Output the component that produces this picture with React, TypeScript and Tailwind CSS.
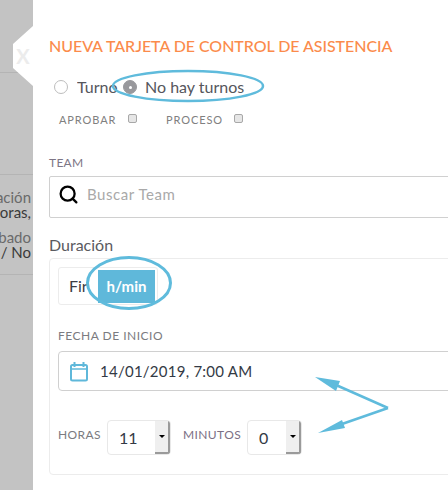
import { Search } from "lucide-react";

function Radio({ checked }: { checked?: boolean }) {
  return (
    <span
      className={`w-[14px] h-[14px] rounded-full flex-none flex items-center justify-center border ${
        checked ? "bg-[#98989c] border-[#98989c]" : "bg-white border-[#bdbdbd]"
      }`}
    >
      {checked && <span className="w-[3px] h-[3px] rounded-full bg-white" />}
    </span>
  );
}

function Check() {
  return <span className="block w-[9px] h-[9px] mb-[3px] rounded-[2px] bg-[#e6e6e6] border border-[#a8a8a8]" />;
}

function SpinSelect({ value, width }: { value: string; width: string }) {
  return (
    <div className={`${width} h-[35px] flex-none flex border border-[#e8e8e8] rounded-[4px] overflow-hidden bg-white`}>
      <span className="flex-1 pl-[11px] flex items-center text-[16px] text-[#333a45]">{value}</span>
      <span className="w-[15px] bg-[#efefef] border-r-2 border-b-2 border-[#9a9a9a] flex items-center justify-center">
        <span className="w-0 h-0 border-l-[3px] border-r-[3px] border-t-[3px] border-l-transparent border-r-transparent border-t-black" />
      </span>
    </div>
  );
}

export default function App() {
  return (
    <div className="relative flex w-[448px] h-[490px] overflow-hidden bg-white font-['Lato',sans-serif]">
      {/* fondo atenuado */}
      <div className="w-[33px] flex-none bg-[#c3c3c3] text-[15px] leading-[15px] text-[#6a6a6a] overflow-hidden">
        <div className="h-[73px] border-b border-[#b4b4b4]" />
        <div className="h-[102px] border-b border-[#b4b4b4]" />
        <div className="h-[100px] border-b border-[#b4b4b4] pt-[15px] pr-[2px] whitespace-nowrap flex flex-col items-end">
          <span>ación</span>
          <span className="text-[#3a3a3a]">oras,</span>
          <span className="mt-[10px]">obado</span>
          <span className="text-[#3a3a3a]">/ No</span>
        </div>
      </div>

      {/* panel */}
      <div className="flex-1 min-w-0 pl-[16px] pt-[37px]">
        <h1 className="text-[16px] leading-[18px] tracking-[-0.05px] font-medium text-[#fb8b4b] whitespace-nowrap">
          NUEVA TARJETA DE CONTROL DE ASISTENCIA
        </h1>

        <div className="mt-[22px] pl-[5px] h-[20px] flex items-center text-[16px] text-[#55565c]">
          <Radio />
          <span className="ml-[9px] w-[46px] overflow-hidden">Turno</span>
          <Radio checked />
          <span className="ml-[8px] whitespace-nowrap">No hay turnos</span>
        </div>

        <div className="mt-[15px] pl-[10px] h-[16px] flex items-center text-[11px] tracking-[0.9px] text-[#808080]">
          <span className="w-[69px]">APROBAR</span>
          <Check />
          <span className="ml-[29px] w-[68px]">PROCESO</span>
          <Check />
        </div>

        <div className="mt-[28px] text-[12px] leading-[14px] tracking-[0.3px] text-[#7d7585]">TEAM</div>
        <div className="mt-[6px] w-[420px] h-[42px] border border-[#d0d0d0] rounded-[2px] flex items-center pl-[8px] pb-[6px]">
          <Search size={21} strokeWidth={2.6} className="text-black flex-none" />
          <span className="ml-[8px] text-[15px] tracking-[0.55px] text-[#a9a9a9]">Buscar Team</span>
        </div>

        <div className="mt-[17px] text-[16px] leading-[20px] text-[#5a5a60]">Duración</div>
        <div className="mt-[3px] w-[420px] h-[217px] border border-[#ececec] rounded-[4px] pl-[8px] pt-[8px]">
          <div className="w-[100px] h-[38px] border border-[#ececec] rounded-[3px] flex items-center pl-[10px] pr-[2px] text-[16px] text-[#3c3c44] overflow-hidden">
            <span className="w-[30px]">Fir</span>
            <span className="w-[57px] h-[33px] flex-none bg-[#5fb8da] text-white font-bold text-[15px] flex items-center justify-center">
              h/min
            </span>
          </div>

          <div className="mt-[24px] text-[12px] leading-[14px] tracking-[0.5px] text-[#7b7b80]">FECHA DE INICIO</div>
          <div className="mt-[8px] w-[400px] h-[40px] border border-[#d0d0d0] rounded-[4px] flex items-center pl-[10px]">
            <svg width="20" height="21" viewBox="0 0 20 21" fill="none" stroke="#5fb8da" className="flex-none">
              <rect x="2" y="4" width="16" height="15.5" rx="1.5" strokeWidth="2" />
              <path d="M2 8 H18" strokeWidth="1.5" />
              <path d="M5.5 1 V6 M14.5 1 V6" strokeWidth="2" />
            </svg>
            <span className="ml-[11px] text-[15px] tracking-[0.25px] text-[#333a45]">14/01/2019, 7:00 AM</span>
          </div>

          <div className="mt-[29px] flex items-center">
            <span className="w-[49px] mb-[6px] text-[12px] tracking-[0.4px] text-[#7b7b80]">HORAS</span>
            <SpinSelect value="11" width="w-[64px]" />
            <span className="ml-[12px] w-[64px] mb-[6px] text-[12px] tracking-[0.4px] text-[#7b6f85]">MINUTOS</span>
            <SpinSelect value="0" width="w-[55px]" />
          </div>
        </div>
      </div>

      {/* muesca del botón cerrar */}
      <div className="absolute left-[13px] top-[26px] w-[20px] h-[60px] bg-white [clip-path:polygon(100%_0,100%_100%,0_70%,0_30%)] flex items-center justify-center text-[20px] font-bold text-[#ececec]">
        X
      </div>

      {/* anotaciones */}
      <svg className="absolute inset-0 pointer-events-none" width="448" height="490" fill="none">
        <ellipse cx="188" cy="86" rx="75" ry="15" stroke="#5fbbdc" strokeWidth="2.5" />
        <ellipse cx="129" cy="283" rx="41.5" ry="25.5" stroke="#5fbbdc" strokeWidth="3" />
        <path d="M388 408 L336 385 M388 408 L342 424" stroke="#5fbbdc" strokeWidth="2.5" />
        <path d="M315 377 L340 381 L336 391 Z M318 433 L342 420 L345 428 Z" fill="#5fbbdc" />
      </svg>
    </div>
  );
}
